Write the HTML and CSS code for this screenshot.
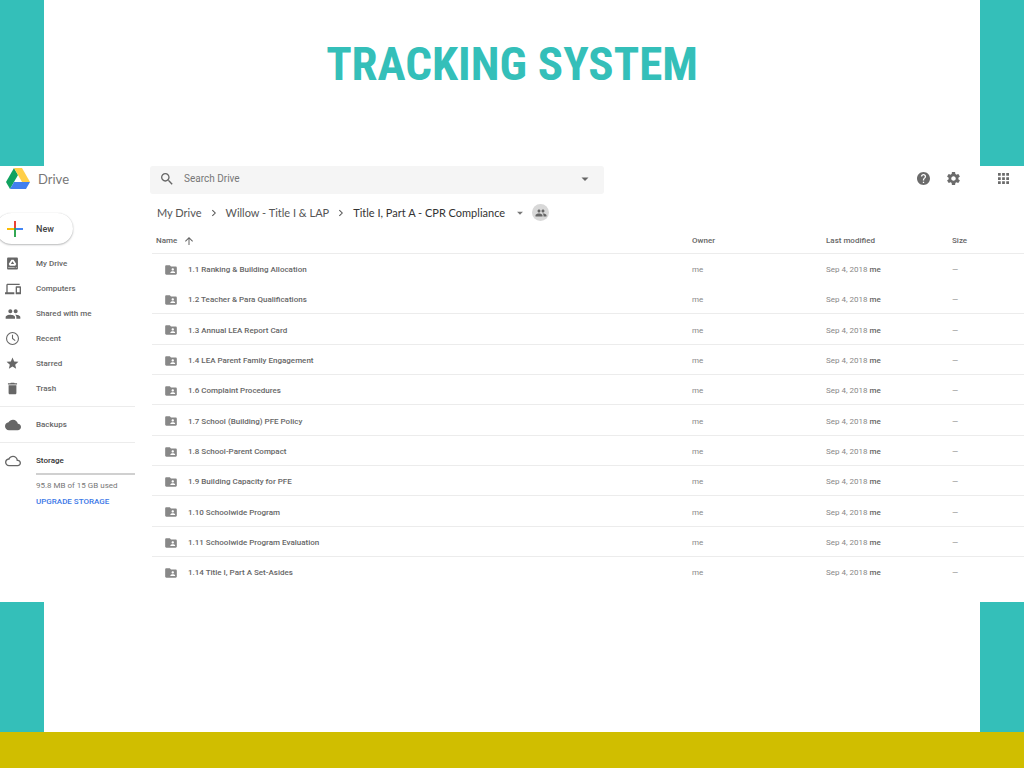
FILE: index.html
```
<!DOCTYPE html>
<html lang="en">
<head>
  <meta charset="UTF-8">
  <meta name="viewport" content="width=device-width, initial-scale=1.0">
  <title>Tracking System</title>
  <link rel="stylesheet" href="styles.css">
</head>
<body>
  <!-- shared icons -->
  <svg class="sprite" aria-hidden="true">
    <symbol id="folder" viewBox="0 0 24 24"><path d="M20 6h-8l-2-2H4c-1.100 0-1.990.9-1.990 2L2 18c0 1.100.9 2 2 2h16c1.100 0 2-.9 2-2V8c0-1.100-.9-2-2-2zm-5 3c1.100 0 2 .9 2 2s-.9 2-2 2-2-.9-2-2 .9-2 2-2zm4 8h-8v-1c0-1.330 2.670-2 4-2s4 .67 4 2v1z"/></symbol>
    <symbol id="people" viewBox="0 0 24 24"><path d="M16 11c1.660 0 2.990-1.340 2.990-3S17.660 5 16 5s-3 1.340-3 3 1.340 3 3 3zm-8 0c1.660 0 2.990-1.340 2.990-3S9.660 5 8 5 5 6.340 5 8s1.340 3 3 3zm0 2c-2.330 0-7 1.170-7 3.500V19h14v-2.500c0-2.330-4.670-3.500-7-3.500zm8 0c-.29 0-.62.02-.97.05 1.160.84 1.970 1.970 1.970 3.450V19h6v-2.500c0-2.330-4.670-3.500-7-3.500z"/></symbol>
    <symbol id="chevron" viewBox="0 0 24 24"><path d="M8 5l7 7-7 7" fill="none" stroke="currentColor" stroke-width="2.500"/></symbol>
    <symbol id="caret" viewBox="0 0 24 24"><path d="M5 9l7 7 7-7z"/></symbol>
  </svg>

  <div class="slide">
    <header class="slide-header">
      <h1>TRACKING SYSTEM</h1>
    </header>

    <div class="drive">
      <aside class="sidebar">
        <a class="logo" href="#">
          <svg viewBox="0 0 24 21" aria-hidden="true">
            <path d="M8 0L0 14l4 7 8-14z" fill="#11a260"/>
            <path d="M8 0h8l8 14h-8z" fill="#ffcf48"/>
            <path d="M8 14h16l-4 7H4z" fill="#4280ef"/>
          </svg>
          <span>Drive</span>
        </a>

        <button class="new-button" type="button">
          <svg viewBox="0 0 16 16" aria-hidden="true">
            <path d="M7 0h2v7H7z" fill="#ea4335"/>
            <path d="M0 7h7v2H0z" fill="#fbbc04"/>
            <path d="M9 7h7v2H9z" fill="#4285f4"/>
            <path d="M7 7h2v9H7z" fill="#34a853"/>
          </svg>
          <span>New</span>
        </button>

        <nav class="nav">
          <a href="#"><svg viewBox="0 0 24 24"><path fill-rule="evenodd" d="M4 1h16c1 0 2 1 2 2v18c0 1-1 2-2 2H4c-1 0-2-1-2-2V3c0-1 1-2 2-2zm6 4l-5 8 2 3h10l2-3-5-8zm2 3l3 5H9zM4 19v1h12v-1zm14 0v1h2v-1z"/></svg>My Drive</a>
          <a href="#"><svg class="wide" viewBox="0 0 24 24"><path d="M4 6h18V4H4c-1.100 0-2 .9-2 2v11H0v3h14v-3H4V6zm19 2h-6c-.55 0-1 .45-1 1v10c0 .55.45 1 1 1h6c.55 0 1-.45 1-1V9c0-.55-.45-1-1-1zm-1 9h-4v-7h4v7z"/></svg>Computers</a>
          <a href="#"><svg class="wide"><use href="#people"/></svg>Shared with me</a>
          <a href="#"><svg viewBox="0 0 24 24"><g fill="none" stroke="currentColor" stroke-width="2"><circle cx="12" cy="12" r="11"/><path d="M12 5v7l5 4"/></g></svg>Recent</a>
          <a href="#"><svg viewBox="1 1 22 22"><path d="M12 17.270L18.180 21l-1.640-7.030L22 9.240l-7.190-.61L12 2 9.190 8.630 2 9.240l5.460 4.730L5.820 21z"/></svg>Starred</a>
          <a href="#"><svg viewBox="2 2 20 20"><path d="M6 19c0 1.100.9 2 2 2h8c1.100 0 2-.9 2-2V7H6v12zM19 4h-3.500l-1-1h-5l-1 1H5v2h14V4z"/></svg>Trash</a>
        </nav>
        <nav class="nav ruled">
          <a href="#"><svg class="wide" viewBox="0 0 24 24"><path d="M19.350 10.040C18.670 6.590 15.640 4 12 4 9.110 4 6.600 5.640 5.350 8.040 2.340 8.360 0 10.910 0 14c0 3.310 2.690 6 6 6h13c2.760 0 5-2.240 5-5 0-2.640-2.050-4.780-4.650-4.960z"/></svg>Backups</a>
        </nav>
        <div class="nav ruled">
          <a class="storage-link" href="#"><svg class="wide" viewBox="0 0 24 24"><path d="M19.350 10.040C18.670 6.590 15.640 4 12 4 9.110 4 6.600 5.640 5.350 8.040 2.340 8.360 0 10.910 0 14c0 3.310 2.690 6 6 6h13c2.760 0 5-2.240 5-5 0-2.640-2.050-4.780-4.650-4.960zM19 18H6c-2.210 0-4-1.790-4-4s1.790-4 4-4h.71C7.370 7.690 9.480 6 12 6c3.040 0 5.500 2.460 5.500 5.500v.5H19c1.660 0 3 1.340 3 3s-1.340 3-3 3z"/></svg>Storage</a>
          <div class="quota">
            <p>95.8 MB of 15 GB used</p>
            <a href="#">UPGRADE STORAGE</a>
          </div>
        </div>
      </aside>

      <main class="content">
        <div class="toolbar">
          <form class="search" role="search">
            <svg viewBox="3 3 18 18" aria-hidden="true"><path d="M15.500 14h-.79l-.28-.27C15.410 12.590 16 11.110 16 9.500 16 5.910 13.090 3 9.500 3S3 5.910 3 9.500 5.910 16 9.500 16c1.610 0 3.090-.59 4.230-1.570l.27.28v.79l5 4.990L20.490 19l-4.990-5zm-6 0C7.010 14 5 11.990 5 9.500S7.010 5 9.500 5 14 7.010 14 9.500 11.990 14 9.500 14z"/></svg>
            <input type="text" placeholder="Search Drive" aria-label="Search Drive">
            <button type="button" aria-label="Search options"><svg><use href="#caret"/></svg></button>
          </form>
          <div class="actions">
            <button type="button" aria-label="Help"><svg viewBox="2 2 20 20"><path d="M12 2C6.480 2 2 6.480 2 12s4.480 10 10 10 10-4.480 10-10S17.520 2 12 2zm1 17h-2v-2h2v2zm2.070-7.750l-.9.920C13.450 12.900 13 13.500 13 15h-2v-.5c0-1.100.45-2.100 1.170-2.830l1.240-1.260c.37-.36.590-.86.590-1.410 0-1.100-.9-2-2-2s-2 .9-2 2H8c0-2.210 1.790-4 4-4s4 1.790 4 4c0 .88-.36 1.680-.93 2.250z"/></svg></button>
            <button type="button" aria-label="Settings"><svg viewBox="2 2 20 20"><path d="M19.430 12.980c.04-.32.070-.64.070-.98s-.03-.66-.07-.98l2.110-1.650c.19-.15.240-.42.120-.64l-2-3.460c-.12-.22-.39-.3-.61-.22l-2.490 1c-.52-.4-1.080-.73-1.690-.98l-.38-2.650C14.460 2.180 14.250 2 14 2h-4c-.25 0-.46.18-.49.42l-.38 2.650c-.61.25-1.170.59-1.690.98l-2.490-1c-.23-.09-.49 0-.61.22l-2 3.460c-.13.22-.07.490.12.640l2.110 1.650c-.04.32-.07.65-.07.98s.03.66.070.98l-2.110 1.650c-.19.15-.24.42-.12.640l2 3.460c.12.22.39.3.61.22l2.490-1c.52.4 1.080.73 1.690.98l.38 2.650c.03.24.24.42.49.42h4c.25 0 .46-.18.49-.42l.38-2.650c.61-.25 1.170-.59 1.690-.98l2.490 1c.23.09.49 0 .61-.22l2-3.460c.12-.22.070-.49-.12-.64l-2.110-1.650zM12 15.500c-1.930 0-3.500-1.570-3.500-3.500s1.570-3.500 3.500-3.500 3.500 1.570 3.500 3.500-1.570 3.500-3.500 3.500z"/></svg></button>
            <button class="apps" type="button" aria-label="Apps"><svg viewBox="4 4 16 16"><path d="M4 8h4V4H4zm6 0h4V4h-4zm6 0h4V4h-4zM4 14h4v-4H4zm6 0h4v-4h-4zm6 0h4v-4h-4zM4 20h4v-4H4zm6 0h4v-4h-4zm6 0h4v-4h-4z"/></svg></button>
          </div>
        </div>

        <nav class="breadcrumb">
          <a href="#">My Drive</a>
          <svg><use href="#chevron"/></svg>
          <a href="#">Willow - Title I &amp; LAP</a>
          <svg><use href="#chevron"/></svg>
          <a class="current" href="#">Title I, Part A - CPR Compliance <svg><use href="#caret"/></svg></a>
          <button class="shared" type="button" aria-label="Manage people"><svg><use href="#people"/></svg></button>
        </nav>

        <table class="files">
          <colgroup>
            <col>
            <col class="col-owner">
            <col class="col-modified">
            <col class="col-size">
          </colgroup>
          <thead>
            <tr>
              <th>Name <svg viewBox="4 4 16 16"><path d="M4 12l1.410 1.410L11 7.830V20h2V7.830l5.580 5.590L20 12l-8-8z"/></svg></th>
              <th>Owner</th>
              <th>Last modified</th>
              <th>Size</th>
            </tr>
          </thead>
          <tbody>
            <tr><td><svg><use href="#folder"/></svg>1.1 Ranking &amp; Building Allocation</td><td>me</td><td>Sep 4, 2018 <b>me</b></td><td>—</td></tr>
            <tr><td><svg><use href="#folder"/></svg>1.2 Teacher &amp; Para Qualifications</td><td>me</td><td>Sep 4, 2018 <b>me</b></td><td>—</td></tr>
            <tr><td><svg><use href="#folder"/></svg>1.3 Annual LEA Report Card</td><td>me</td><td>Sep 4, 2018 <b>me</b></td><td>—</td></tr>
            <tr><td><svg><use href="#folder"/></svg>1.4 LEA Parent Family Engagement</td><td>me</td><td>Sep 4, 2018 <b>me</b></td><td>—</td></tr>
            <tr><td><svg><use href="#folder"/></svg>1.6 Complaint Procedures</td><td>me</td><td>Sep 4, 2018 <b>me</b></td><td>—</td></tr>
            <tr><td><svg><use href="#folder"/></svg>1.7 School (Building) PFE Policy</td><td>me</td><td>Sep 4, 2018 <b>me</b></td><td>—</td></tr>
            <tr><td><svg><use href="#folder"/></svg>1.8 School-Parent Compact</td><td>me</td><td>Sep 4, 2018 <b>me</b></td><td>—</td></tr>
            <tr><td><svg><use href="#folder"/></svg>1.9 Building Capacity for PFE</td><td>me</td><td>Sep 4, 2018 <b>me</b></td><td>—</td></tr>
            <tr><td><svg><use href="#folder"/></svg>1.10 Schoolwide Program</td><td>me</td><td>Sep 4, 2018 <b>me</b></td><td>—</td></tr>
            <tr><td><svg><use href="#folder"/></svg>1.11 Schoolwide Program Evaluation</td><td>me</td><td>Sep 4, 2018 <b>me</b></td><td>—</td></tr>
            <tr><td><svg><use href="#folder"/></svg>1.14 Title I, Part A Set-Asides</td><td>me</td><td>Sep 4, 2018 <b>me</b></td><td>—</td></tr>
          </tbody>
        </table>
      </main>
    </div>

    <div class="slide-fill"></div>
    <footer class="slide-footer"></footer>
  </div>
</body>
</html>
```
FILE: styles.css
```
* {
  box-sizing: border-box;
}

body {
  margin: 0;
  background: #fff;
  color: #666;
  font-family: Roboto, "Liberation Sans", sans-serif;
  font-size: 8px;
}

a {
  color: inherit;
  text-decoration: none;
}

button {
  padding: 0;
  border: none;
  background: none;
  color: inherit;
  font-family: inherit;
  cursor: pointer;
}

svg {
  display: block;
  flex: none;
  fill: currentColor;
}

.sprite {
  display: none;
}

/* slide frame */
.slide {
  display: flex;
  flex-direction: column;
  min-height: 100vh;
  overflow: hidden;
}

.slide-header {
  padding: 36px 0 74px;
  border: solid #34bfb9;
  border-width: 0 44px;
  text-align: center;
}

.slide-header h1 {
  margin: 0;
  color: #34bfb9;
  font-family: "Arial Narrow", "Roboto Condensed", sans-serif;
  font-size: 47px;
  line-height: 56px;
}

.slide-fill {
  flex: 1;
  border: solid #34bfb9;
  border-width: 0 44px;
}

.slide-footer {
  height: 36px;
  background: #d0be00;
}

/* drive window */
.drive {
  display: grid;
  grid-template-columns: 135px 1fr;
  column-gap: 15px;
  padding-bottom: 15px;
}

.logo {
  display: flex;
  align-items: center;
  gap: 8px;
  height: 25px;
  padding-left: 6px;
  color: #777;
  font-family: Lato, sans-serif;
  font-size: 13px;
}

.logo svg {
  width: 24px;
  height: 21px;
}

.new-button {
  display: flex;
  align-items: center;
  gap: 13px;
  width: 77px;
  height: 31px;
  margin: 22px 0 7px -4px;
  padding-left: 11px;
  border-radius: 16px;
  box-shadow: 0 1px 2px rgba(60, 64, 67, 0.35), 0 0 1px rgba(60, 64, 67, 0.2);
  color: #444;
  font-size: 9px;
  font-weight: 500;
}

.new-button svg {
  width: 16px;
  height: 16px;
}

.nav a {
  display: flex;
  align-items: center;
  height: 25px;
  font-weight: 500;
}

.nav svg {
  width: 13px;
  height: 13px;
  margin: 0 17px 0 6px;
}

.nav svg.wide {
  width: 16px;
  height: 16px;
  margin: 0 15px 0 5px;
}

.ruled {
  margin-top: 5px;
  padding-top: 5px;
  border-top: 1px solid #ececec;
}

.nav .storage-link {
  color: #333;
}

.nav .storage-link svg {
  color: #666;
}

.quota {
  margin-left: 36px;
  padding-top: 3px;
  border-top: 2px solid #d0d0d0;
  color: #777;
  line-height: 16px;
}

.quota p {
  margin: 0;
}

.quota a {
  height: 16px;
  color: #3b78e7;
}

/* search and actions */
.toolbar {
  display: flex;
  justify-content: space-between;
}

.search {
  display: flex;
  align-items: center;
  width: 52%;
  height: 28px;
  padding: 0 13px 3px 11px;
  border-radius: 3px;
  background: #f5f5f5;
}

.search svg {
  width: 12px;
  height: 12px;
}

.search input {
  flex: 1;
  min-width: 0;
  margin-left: 11px;
  padding: 0;
  border: none;
  outline: none;
  background: none;
  font-family: inherit;
  font-size: 10px;
}

.search input::placeholder {
  color: #777;
}

.actions {
  display: flex;
  align-items: center;
  gap: 17px;
  height: 25px;
  padding-right: 15px;
  color: #6b6b6b;
}

.actions svg {
  width: 13px;
  height: 13px;
}

.actions .apps {
  margin-left: 21px;
}

.actions .apps svg {
  width: 11px;
  height: 11px;
}

/* path */
.breadcrumb {
  display: flex;
  align-items: center;
  gap: 7px;
  height: 37px;
  padding-left: 7px;
  color: #555;
  font-family: Lato, sans-serif;
  font-size: 11px;
}

.breadcrumb svg {
  width: 10px;
  height: 10px;
}

.breadcrumb .current {
  display: flex;
  align-items: center;
  gap: 10px;
  color: #333;
}

.current svg {
  color: #777;
}

.breadcrumb .shared {
  display: grid;
  place-items: center;
  width: 17px;
  height: 17px;
  border-radius: 50%;
  background: #d8d8d8;
  color: #666;
}

.shared svg {
  width: 12px;
  height: 12px;
}

/* file list */
.files {
  width: 100%;
  padding-left: 2px;
  border-spacing: 0;
  table-layout: fixed;
}

.col-owner {
  width: 134px;
}

.col-modified {
  width: 126px;
}

.col-size {
  width: 72px;
}

.files th,
.files td {
  padding: 0;
  border-bottom: 1px solid #ececec;
  text-align: left;
  white-space: nowrap;
}

.files th {
  height: 23px;
  padding-bottom: 3px;
  font-weight: 500;
}

.files th:first-child {
  padding-left: 4px;
}

.files th svg {
  display: inline-block;
  width: 8px;
  height: 8px;
  margin-left: 6px;
  vertical-align: middle;
}

.files td {
  height: 30px;
  padding-top: 2px;
  color: #888;
}

.files tr:nth-child(3n) td {
  height: 31px;
}

.files tbody tr:first-child td,
.files tbody tr:last-child td {
  border-bottom-color: transparent;
}

.files td:first-child {
  padding-left: 12px;
  color: #666;
  font-weight: 500;
}

.files td svg {
  display: inline-block;
  width: 14px;
  height: 14px;
  margin: -3px 10px -3px 0;
  color: #888;
  vertical-align: middle;
}

.files b {
  color: #666;
  font-weight: 500;
}
```
